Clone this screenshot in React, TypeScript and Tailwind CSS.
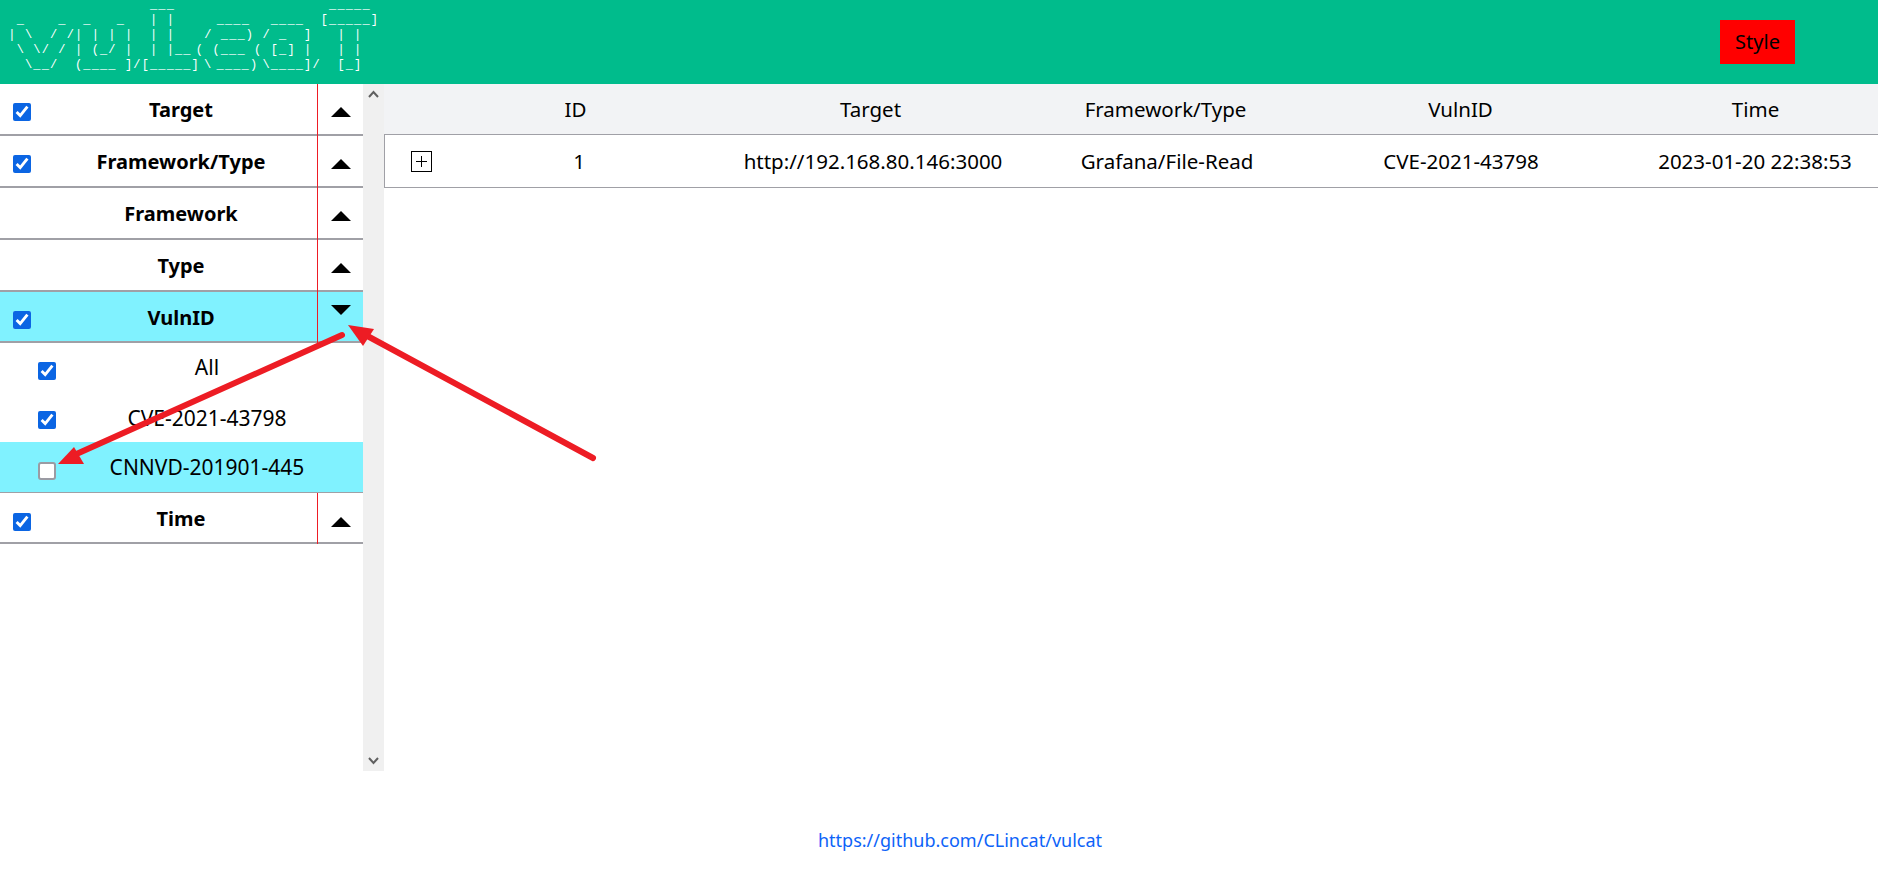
import React from 'react'

// numbers are runs of spaces, easier to line the letters up this way
const line = (...parts: (number | string)[]) =>
  parts.map((part) => (typeof part === 'number' ? ' '.repeat(part) : part)).join('')

const logo = [
  line(36, '___', 37, '_____'),
  line(4, '_', 8, '_', 4, '_', 6, '_', 6, '|', 2, '|', 10, '____', 5, '____', 4, '[_____]'),
  line(2, '|', 2, '\\', 4, '/', 2, '/|', 2, '|', 2, '|', 2, '|', 4, '|', 2, '|', 7, '/', 2, '___)', 2, '/', 2, '_', 4, ']', 6, '|', 2, '|'),
  line(4, '\\', 2, '\\/', 2, '/', 2, '|', 2, '(_/', 2, '|', 4, '|', 2, '|__', 1, '(', 2, '(___', 2, '(', 2, '[_]', 2, '|', 6, '|', 2, '|'),
  line(6, '\\__/', 4, '(____', 2, ']/[_____]', 1, '\\', 1, '____)', 1, '\\____]/', 4, '[_]'),
]

const columns = ['ID', 'Target', 'Framework/Type', 'VulnID', 'Time']
const values = ['1', 'http://192.168.80.146:3000', 'Grafana/File-Read', 'CVE-2021-43798', '2023-01-20 22:38:53']

function Triangle({ down, className }: { down?: boolean; className: string }) {
  return (
    <svg width="20" height="10" viewBox="0 0 20 10" className={className}>
      <polygon points={down ? '0,0 20,0 10,10' : '10,0 20,10 0,10'} fill="#000" />
    </svg>
  )
}

function FilterRow({
  label,
  checkbox = true,
  open = false,
  height = 'h-[52px]',
  arrow = 'mt-1',
  check = 'mt-1',
}: {
  label: string
  checkbox?: boolean
  open?: boolean
  height?: string
  arrow?: string
  check?: string
}) {
  return (
    <div className={`flex ${height} shrink-0 shadow-[inset_0_-2px_0_#a0a0a6] ${open ? 'bg-[#80f2ff]' : ''}`}>
      <div className="flex w-[45px] shrink-0 items-center pl-[13px]">
        {checkbox && <input type="checkbox" defaultChecked className={`${check} h-[18px] w-[18px] accent-[#0b65e3]`} />}
      </div>
      <div className="flex w-[272px] shrink-0 items-center justify-center text-[20px] font-bold">{label}</div>
      <div className="flex w-[46px] shrink-0 items-center justify-center border-l border-[#ee1c25]">
        <Triangle down={open} className={arrow} />
      </div>
    </div>
  )
}

function SubRow({
  label,
  checked,
  active,
  height = 'h-[50px]',
  text = '',
}: {
  label: string
  checked: boolean
  active?: boolean
  height?: string
  text?: string
}) {
  return (
    <div className={`flex ${height} shrink-0 items-center ${active ? 'bg-[#80f2ff] shadow-[inset_0_-1px_0_#a0a0a6]' : ''}`}>
      <div className="flex w-[51px] shrink-0 items-center pl-[38px]">
        {checked ? (
          <input type="checkbox" defaultChecked className="mt-[6px] h-[18px] w-[18px] shrink-0 accent-[#0b65e3]" />
        ) : (
          <input
            type="checkbox"
            className="mt-[6px] h-[18px] w-[18px] shrink-0 appearance-none rounded-[3px] border-2 border-[#9b9ba3] bg-white"
          />
        )}
      </div>
      <div className={`flex-1 text-center text-[21px] ${text}`}>{label}</div>
    </div>
  )
}

function App() {
  return (
    <div className="relative flex h-screen flex-col overflow-hidden bg-white font-['Noto_Sans','Open_Sans',sans-serif] text-black">
      <header className="flex h-[84px] shrink-0 items-center justify-between bg-[#00bc8c]">
        <pre className="mb-[14px] font-['Liberation_Mono',monospace] text-[12px] leading-[15px] tracking-[1.13px] text-white [word-spacing:-4.165px]">
          {logo.join('\n')}
        </pre>
        <button className="mr-[83px] h-[44px] w-[75px] bg-[#ff0000] text-[20px] text-black">Style</button>
      </header>

      <div className="flex h-[687px] shrink-0">
        <aside className="flex w-[363px] shrink-0 flex-col">
          <FilterRow label="Target" />
          <FilterRow label="Framework/Type" />
          <FilterRow label="Framework" checkbox={false} />
          <FilterRow label="Type" checkbox={false} />
          <FilterRow label="VulnID" open height="h-[51px]" arrow="mb-[15px]" />
          <SubRow label="All" checked height="h-[49px]" />
          <SubRow label="CVE-2021-43798" checked text="mt-[3px]" />
          <SubRow label="CNNVD-201901-445" checked={false} active height="h-[51px]" text="mt-[1px]" />
          <FilterRow label="Time" height="h-[51px]" arrow="mt-[7px]" check="mt-[6px]" />
        </aside>

        <div className="flex w-[21px] shrink-0 flex-col items-center justify-between bg-[#f0f0f0] py-[6px]">
          <svg width="11" height="8" viewBox="0 0 11 8">
            <path d="M1 7 L5.5 2 L10 7" fill="none" stroke="#606060" strokeWidth="2" />
          </svg>
          <svg width="11" height="8" viewBox="0 0 11 8">
            <path d="M1 1 L5.5 6 L10 1" fill="none" stroke="#606060" strokeWidth="2" />
          </svg>
        </div>

        <main className="min-w-0 flex-1 overflow-hidden">
          <div className="grid h-[51px] w-[1519px] grid-cols-[44px_repeat(5,295px)] items-center border-b border-[#a0a0a6] bg-[#f2f3f5] text-[20.5px]">
            <div />
            {columns.map((column) => (
              <div key={column} className="text-center">
                {column}
              </div>
            ))}
          </div>
          <div className="grid h-[53px] w-[1519px] grid-cols-[47px_repeat(5,294px)] items-center border-b border-l border-[#a0a0a6] text-[20.5px]">
            <div className="pl-[26px]">
              <div className="flex h-[21px] w-[21px] items-center justify-center border border-black">
                <svg width="11" height="11" viewBox="0 0 11 11">
                  <path d="M5.5 0 V11 M0 5.5 H11" stroke="#000" strokeWidth="1" />
                </svg>
              </div>
            </div>
            {values.map((value) => (
              <div key={value} className="text-center">
                {value}
              </div>
            ))}
          </div>
        </main>
      </div>

      <footer className="flex flex-1 items-center justify-center pl-[42px] pt-[30px]">
        <a href="#" className="text-[18px] text-[#0d63f8]">
          https://github.com/CLincat/vulcat
        </a>
      </footer>

      {/* red arrows drawn over the screenshot */}
      <svg className="pointer-events-none absolute inset-0" width="1878" height="880" viewBox="0 0 1878 880">
        <path d="M593 458 L360 332" stroke="#ed1c24" strokeWidth="6" strokeLinecap="round" />
        <polygon points="348,325 374,329 363,346" fill="#ed1c24" />
        <path d="M342 335 L72 456" stroke="#ed1c24" strokeWidth="6" strokeLinecap="round" />
        <polygon points="58,464 84,464 74,447" fill="#ed1c24" />
      </svg>
    </div>
  )
}

export default App
